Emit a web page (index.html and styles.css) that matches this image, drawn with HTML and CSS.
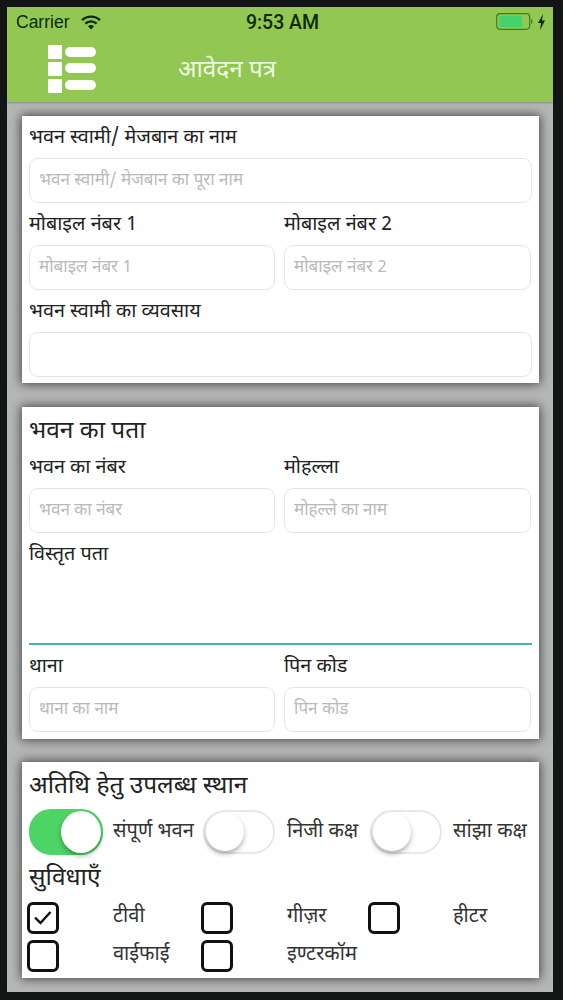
FILE: index.html
```html
<!DOCTYPE html>
<html lang="hi">
<head>
<meta charset="utf-8">
<title>आवेदन पत्र</title>
<link rel="stylesheet" href="styles.css">
</head>
<body>
<div class="screen">
  <header class="header">
    <div class="status">
      <span class="carrier">Carrier</span>
      <svg class="wifi" viewBox="0 0 20 15" width="20" height="15"><path d="M1 5.200a13 13 0 0 1 18 0" fill="none" stroke="#102a05" stroke-width="2.400"/><path d="M4.400 8.600a8.200 8.200 0 0 1 11.200 0" fill="none" stroke="#102a05" stroke-width="2.400"/><path d="M10 14.500l-3-3.200a4.400 4.400 0 0 1 6 0z" fill="#102a05"/></svg>
      <span class="time">9:53 AM</span>
      <svg class="battery" viewBox="0 0 50 18" width="50" height="18"><rect x="0.700" y="0.700" width="33" height="15.600" rx="3.500" fill="none" stroke="#3f7a2c" stroke-width="1.200"/><rect x="3" y="3" width="23" height="11" fill="#46d16b"/><rect x="35" y="6.500" width="1.300" height="4" fill="#3f7a2c"/><path d="M47 1l-5 9h3l-1 7 5-9.500h-3z" fill="#102a05"/></svg>
    </div>
    <div class="appbar">
      <svg class="menu" viewBox="0 0 48 48" width="48" height="48"><g fill="#fff"><rect x="0" y="0" width="14" height="14" rx="1"/><rect x="0" y="17" width="14" height="14" rx="1"/><rect x="0" y="34" width="14" height="14" rx="1"/><rect x="17" y="2" width="31" height="10" rx="5"/><rect x="17" y="18" width="31" height="10" rx="5"/><rect x="17" y="35" width="31" height="10" rx="5"/></g></svg>
      <span class="title">आवेदन पत्र</span>
    </div>
  </header>
  <main class="content">
    <section class="card card-one">
      <div class="label">भवन स्वामी/ मेजबान का नाम</div>
      <div class="input ph">भवन स्वामी/ मेजबान का पूरा नाम</div>
      <div class="cols">
        <div>
          <div class="label">मोबाइल नंबर 1</div>
          <div class="input ph">मोबाइल नंबर 1</div>
        </div>
        <div>
          <div class="label">मोबाइल नंबर 2</div>
          <div class="input ph">मोबाइल नंबर 2</div>
        </div>
      </div>
      <div class="label">भवन स्वामी का व्यवसाय</div>
      <div class="input"></div>
    </section>
    <section class="card card-two">
      <h2 class="heading">भवन का पता</h2>
      <div class="cols">
        <div>
          <div class="label">भवन का नंबर</div>
          <div class="input ph">भवन का नंबर</div>
        </div>
        <div>
          <div class="label">मोहल्ला</div>
          <div class="input ph">मोहल्ले का नाम</div>
        </div>
      </div>
      <div class="label">विस्तृत पता</div>
      <div class="textarea"></div>
      <div class="cols">
        <div>
          <div class="label">थाना</div>
          <div class="input ph">थाना का नाम</div>
        </div>
        <div>
          <div class="label">पिन कोड</div>
          <div class="input ph">पिन कोड</div>
        </div>
      </div>
    </section>
    <section class="card card-three">
      <h2 class="heading">अतिथि हेतु उपलब्ध स्थान</h2>
      <div class="options toggles">
        <span class="toggle on"></span><span class="opt">संपूर्ण भवन</span>
        <span class="toggle"></span><span class="opt">निजी कक्ष</span>
        <span class="toggle"></span><span class="opt">सांझा कक्ष</span>
      </div>
      <h2 class="heading heading-sub">सुविधाएँ</h2>
      <div class="options checks">
        <span class="check"><svg viewBox="0 0 27 27" width="27" height="27"><path d="M6 13.500l5.500 5.500 10-11" fill="none" stroke="#111" stroke-width="2.400"/></svg></span><span class="opt">टीवी</span>
        <span class="check"></span><span class="opt">गीज़र</span>
        <span class="check"></span><span class="opt">हीटर</span>
        <span class="check"></span><span class="opt">वाईफाई</span>
        <span class="check"></span><span class="opt">इण्टरकॉम</span>
      </div>
    </section>
  </main>
</div>
</body>
</html>
```
FILE: styles.css
```css
* { box-sizing: border-box; }
html, body { margin: 0; padding: 0; }
body {
  width: 563px;
  height: 1000px;
  background: #121514;
  padding: 7px 10px 8px 7px;
  font-family: "Noto Sans Devanagari", "Noto Sans", "Lohit Devanagari", "Roboto", sans-serif;
  overflow: hidden;
}
.screen {
  width: 546px;
  height: 985px;
  background: #b5b7b5;
  overflow: hidden;
}
.header {
  height: 95px;
  background: #92c753;
  box-shadow: 0 1px 2px rgba(0,0,0,.25);
}
.status {
  height: 30px;
  display: flex;
  align-items: center;
  padding: 0 7px 0 9px;
  color: #102a05;
  font-family: "Liberation Sans", sans-serif;
  font-size: 17.500px;
}
.carrier { width: 65px; }
.time {
  flex: 1;
  text-align: center;
  font-family: "Roboto", sans-serif;
  font-weight: 500;
  font-size: 19.500px;
  padding-right: 32px;
}
.battery { flex: none; margin-left: auto; }
.appbar {
  height: 65px;
  display: flex;
  align-items: flex-start;
  padding: 8px 0 0 41px;
}
.menu { flex: none; }
.title {
  margin: 9px 0 0 82px;
  font-size: 24.300px;
  line-height: 34px;
  color: #eef7e2;
}
.content { padding: 14px 14px 0 15px; }
.card {
  background: #fff;
  padding: 0 7px;
  box-shadow: 0 0 10px 1px rgba(0,0,0,.65);
}
.card-one { height: 267px; margin-bottom: 24px; }
.card-two { height: 332px; margin-bottom: 23px; }
.card-three { height: 216px; }
.label {
  height: 42px;
  line-height: 44px;
  font-size: 19.800px;
  color: #222;
  white-space: nowrap;
}
.input {
  height: 45px;
  border: 1px solid #e4e6e4;
  border-radius: 9px;
  padding: 0 9px;
  line-height: 44px;
  font-size: 17px;
  white-space: nowrap;
}
.ph { color: #b9bbb9; }
.cols {
  display: grid;
  grid-template-columns: 246px 247px;
  column-gap: 9px;
}
.heading {
  margin: 0;
  font-weight: 400;
  font-size: 24.500px;
  line-height: 50px;
  height: 39px;
  color: #222;
  white-space: nowrap;
}
.card-three .heading { height: 47px; line-height: 50px; }
.card-three .heading-sub { height: 47px; line-height: 48px; }
.textarea {
  height: 70px;
  border-bottom: 2px solid #4fb0a8;
}
.options {
  display: grid;
  grid-template-columns: 84px 90px 84px 83px 83px 1fr;
  align-items: center;
  margin-right: -7px;
}
.toggles { height: 46px; }
.checks { row-gap: 7px; grid-auto-rows: 31px; }
.opt {
  font-size: 20px;
  line-height: 35px;
  color: #333;
  white-space: nowrap;
}
.checks .opt { line-height: 37px; }
.toggle {
  display: block;
  position: relative;
  width: 72px;
  height: 44px;
  border-radius: 22px;
  border: 2px solid #e8e8e8;
  background: #fff;
}
.toggle::after {
  content: "";
  position: absolute;
  left: 1px;
  top: 1px;
  width: 38px;
  height: 38px;
  border-radius: 50%;
  background: #fff;
  box-shadow: 0 3px 5px rgba(0,0,0,.3);
}
.toggle.on {
  width: 74px;
  height: 46px;
  background: #4cd464;
  border-color: #4cd464;
}
.toggle.on::after {
  left: 30px;
  top: 0;
  width: 40px;
  height: 42px;
}
.check {
  display: block;
  width: 32px;
  height: 32px;
  border: 3px solid #111;
  border-radius: 6px;
  margin-left: -2px;
}
.check svg { display: block; margin: -1px; }
```
